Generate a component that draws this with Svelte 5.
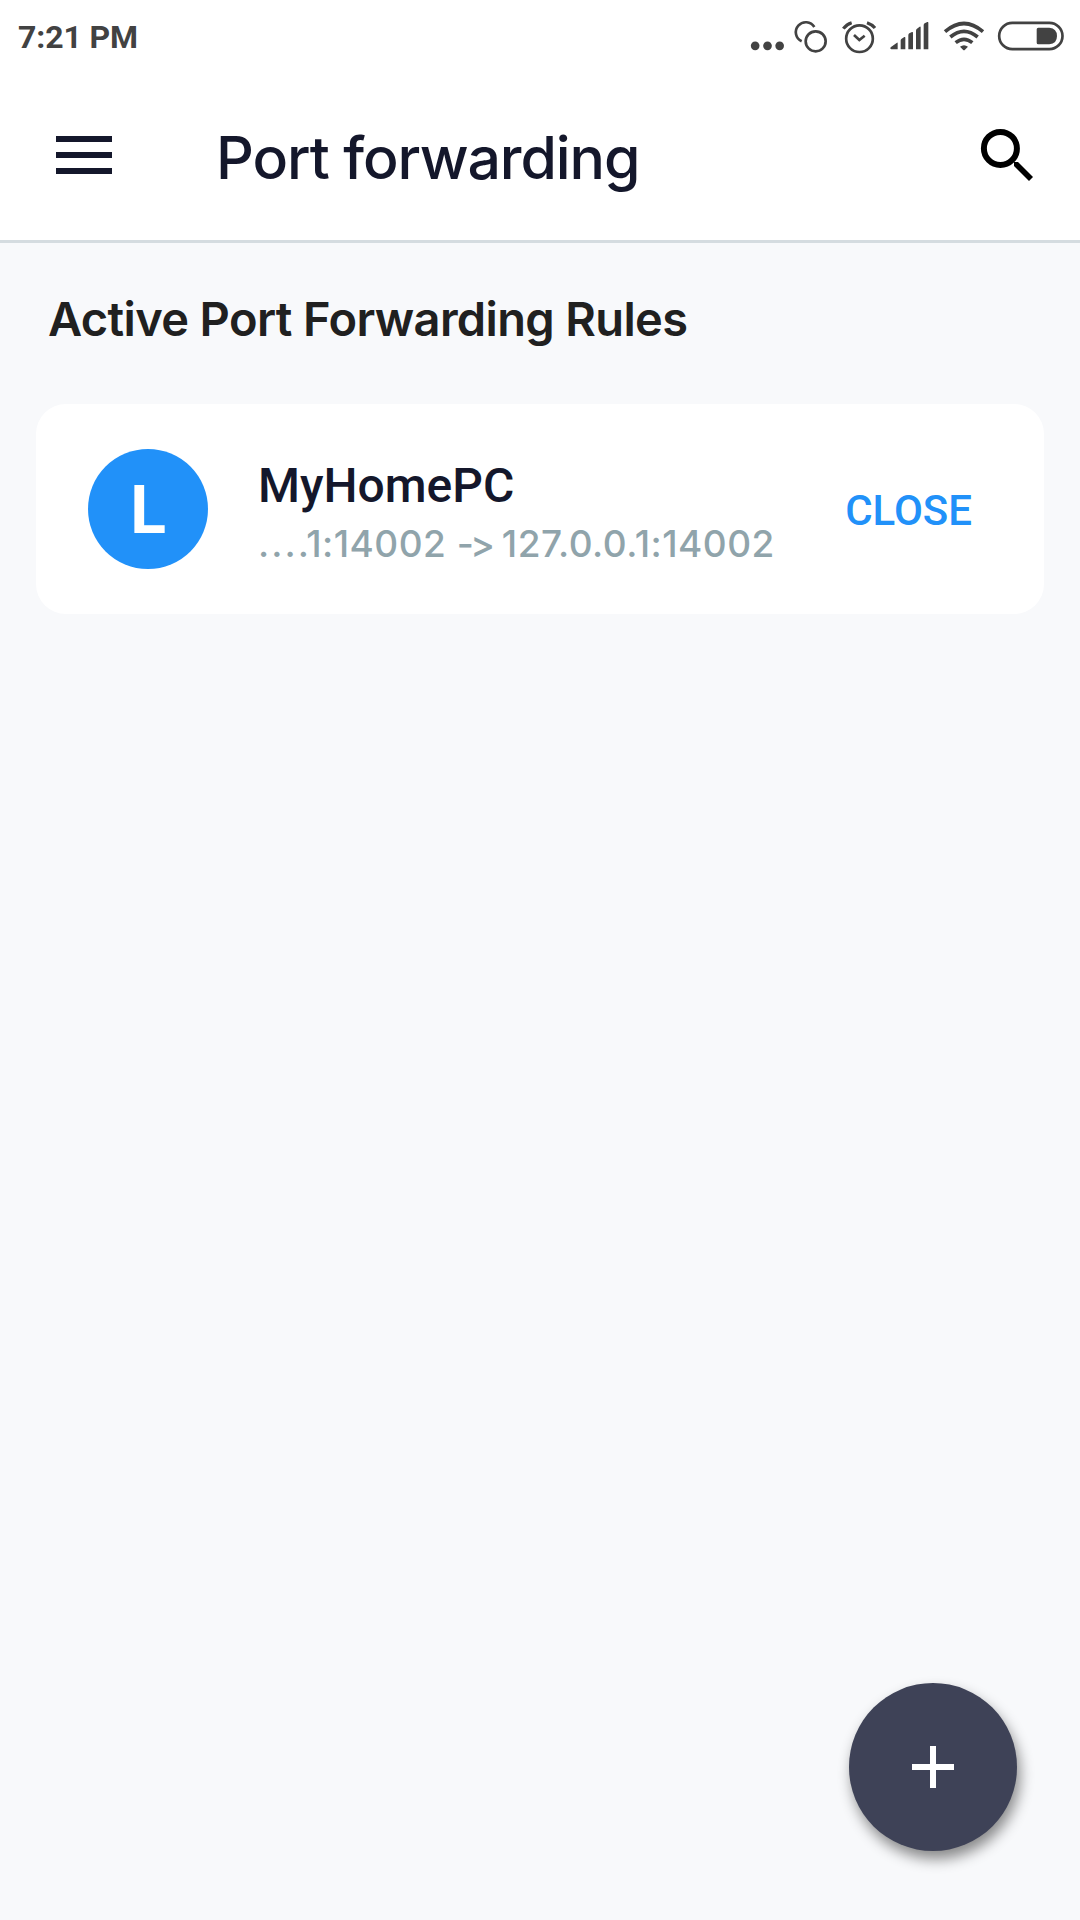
<script>
  const rules = [
    { initial: 'L', name: 'MyHomePC', dots: '...', from: '.1:14002 ', to: ' 127.0.0.1:14002' }
  ];
</script>

<div class="screen">
  <div class="status">
    <span class="time">7:21 PM</span>
    <div class="icons">
      <svg width="39.33" height="40" viewBox="60 50 118 120">
        <circle cx="75.500" cy="136.500" r="13" /><circle cx="112.500" cy="136.500" r="13" /><circle cx="149" cy="136.500" r="13" />
      </svg>
      <svg width="46" height="40" viewBox="178 50 138 120" class="line">
        <circle cx="258" cy="123" r="30" />
        <path d="M216 123A30 30 0 1 1 254 80" />
      </svg>
      <svg width="48" height="40" viewBox="316 50 144 120" class="line">
        <circle cx="389.500" cy="115" r="40" />
        <path d="M373 104L389 119L405 106" />
        <path class="bell" d="M341 85Q350 72 366 67M412 67Q427 72 436 83" />
      </svg>
      <svg width="53.330" height="40" viewBox="460 50 160 120">
        <path d="M484 140L502 127Q504 126 504 129V147H485Q479 144 484 140ZM513 120Q513 117 516 115L524 110Q527 109 527 112V147H513ZM536 105Q536 101 539 99L547 95Q550 94 550 97V147H536ZM559 91Q559 87 562 85L570 79Q573 78 573 81V147H559ZM582 75Q582 71 585 69L593 65Q596 64 596 67V147H582Z" />
      </svg>
      <svg width="53.330" height="40" viewBox="620 50 160 120" class="wifi">
        <path d="M644 94Q701 45 758 94M660 110Q701 76 742 110M676 127Q701 107 726 127" />
        <path class="tip" d="M689 139Q701 130 713 139L704 148Q701 151 698 148Z" />
      </svg>
      <svg width="80" height="40" viewBox="780 50 240 120" class="line">
        <rect x="807.500" y="67.500" width="190" height="79" rx="39.500" />
        <path class="tip" d="M925 82H958Q981 84 981 107T958 132H925Q920 132 920 127V87Q920 82 925 82Z" />
      </svg>
    </div>
  </div>

  <header>
    <button class="menu" aria-label="Menu"><i></i><i></i><i></i></button>
    <h1>Port forwarding</h1>
    <button class="search" aria-label="Search">
      <svg width="54" height="54" viewBox="0 0 54 54">
        <circle cx="20.400" cy="20.400" r="16.500" fill="none" stroke="#000" stroke-width="6" />
        <path d="M34 34H38L53 49L49 53L34 38Z" fill="#000" />
      </svg>
    </button>
  </header>

  <main>
    <h2>Active Port Forwarding Rules</h2>
    {#each rules as rule}
      <section class="card">
        <div class="avatar">{rule.initial}</div>
        <div class="info">
          <div class="name">{rule.name}</div>
          <div class="route"><span class="dots">{rule.dots}</span>{rule.from}<span class="arrow">-&gt;</span>{rule.to}</div>
        </div>
        <button class="close">CLOSE</button>
      </section>
    {/each}
  </main>

  <button class="fab" aria-label="Add rule">
    <svg width="42" height="42" viewBox="0 0 42 42"><path d="M18 0H24V18H42V24H24V42H18V24H0V18H18Z" fill="#fff" /></svg>
  </button>
</div>

<style>
  :global(body) { margin: 0; }
  .screen {
    position: relative;
    width: 1080px;
    height: 1920px;
    overflow: hidden;
    background: #f8f9fb;
    font-family: Inter, sans-serif;
    display: flex;
    flex-direction: column;
  }
  button { border: 0; padding: 0; background: none; font: inherit; }
  svg { display: block; flex: none; }
  .status {
    box-sizing: border-box;
    height: 72px;
    padding: 2px 10px 0 18px;
    display: flex;
    align-items: center;
    justify-content: space-between;
    background: #fff;
  }
  .time {
    font: 700 32px/40px Roboto, sans-serif;
    letter-spacing: -0.1px;
    color: #424242;
    white-space: nowrap;
  }
  .icons { display: flex; fill: #424242; }
  .line { fill: none; stroke: #424242; stroke-width: 8; }
  .bell { stroke-width: 9.5; }
  .wifi { fill: none; stroke: #424242; stroke-width: 11; }
  .tip { fill: #424242; stroke: none; }
  header {
    box-sizing: border-box;
    height: 171px;
    padding: 0 46px 0 56px;
    border-bottom: 3px solid #d5dce0;
    background: #fff;
    display: flex;
    align-items: flex-start;
  }
  .menu {
    width: 56px;
    margin-top: 64px;
    display: flex;
    flex-direction: column;
    gap: 10px;
  }
  .menu i { display: block; width: 56px; height: 6px; background: #14172b; }
  h1 {
    margin: 50px 0 0 104px;
    font-size: 59px;
    line-height: 71px;
    font-weight: 450;
    letter-spacing: -1.1px;
    color: #14172b;
    white-space: nowrap;
  }
  .search { margin: 56px 0 0 auto; }
  main { padding: 0 36px; }
  h2 {
    margin: 45px 0 0 12px;
    height: 116px;
    font-size: 47px;
    line-height: 62px;
    font-weight: 600;
    letter-spacing: -0.64px;
    color: #202020;
    white-space: nowrap;
  }
  .card {
    box-sizing: border-box;
    height: 210px;
    padding: 0 72px 0 52px;
    border-radius: 30px;
    background: #fff;
    display: flex;
    align-items: center;
  }
  .avatar {
    flex: none;
    width: 120px;
    height: 120px;
    border-radius: 50%;
    background: #2191f9;
    color: #fff;
    text-align: center;
    font: 700 66px/124px Roboto, sans-serif;
  }
  .info { margin-left: 50px; padding-top: 12px; flex: 1; white-space: nowrap; }
  .name { font: 500 48px/58px Roboto, sans-serif; color: #14172b; }
  .route {
    font-size: 37px;
    line-height: 58px;
    font-weight: 500;
    letter-spacing: 0.5px;
    font-feature-settings: "calt" 0;
    color: #90a4ab;
  }
  .dots { letter-spacing: 2px; }
  .arrow { letter-spacing: -3.6px; }
  .close { padding-top: 4px; font: 500 42px/50px Roboto, sans-serif; color: #2191f9; }
  .fab {
    position: absolute;
    right: 63px;
    bottom: 69px;
    width: 168px;
    height: 168px;
    border-radius: 50%;
    background: #3e4257;
    box-shadow: 3px 8px 14px rgba(0, 0, 0, 0.45);
    display: flex;
    align-items: center;
    justify-content: center;
  }
</style>
